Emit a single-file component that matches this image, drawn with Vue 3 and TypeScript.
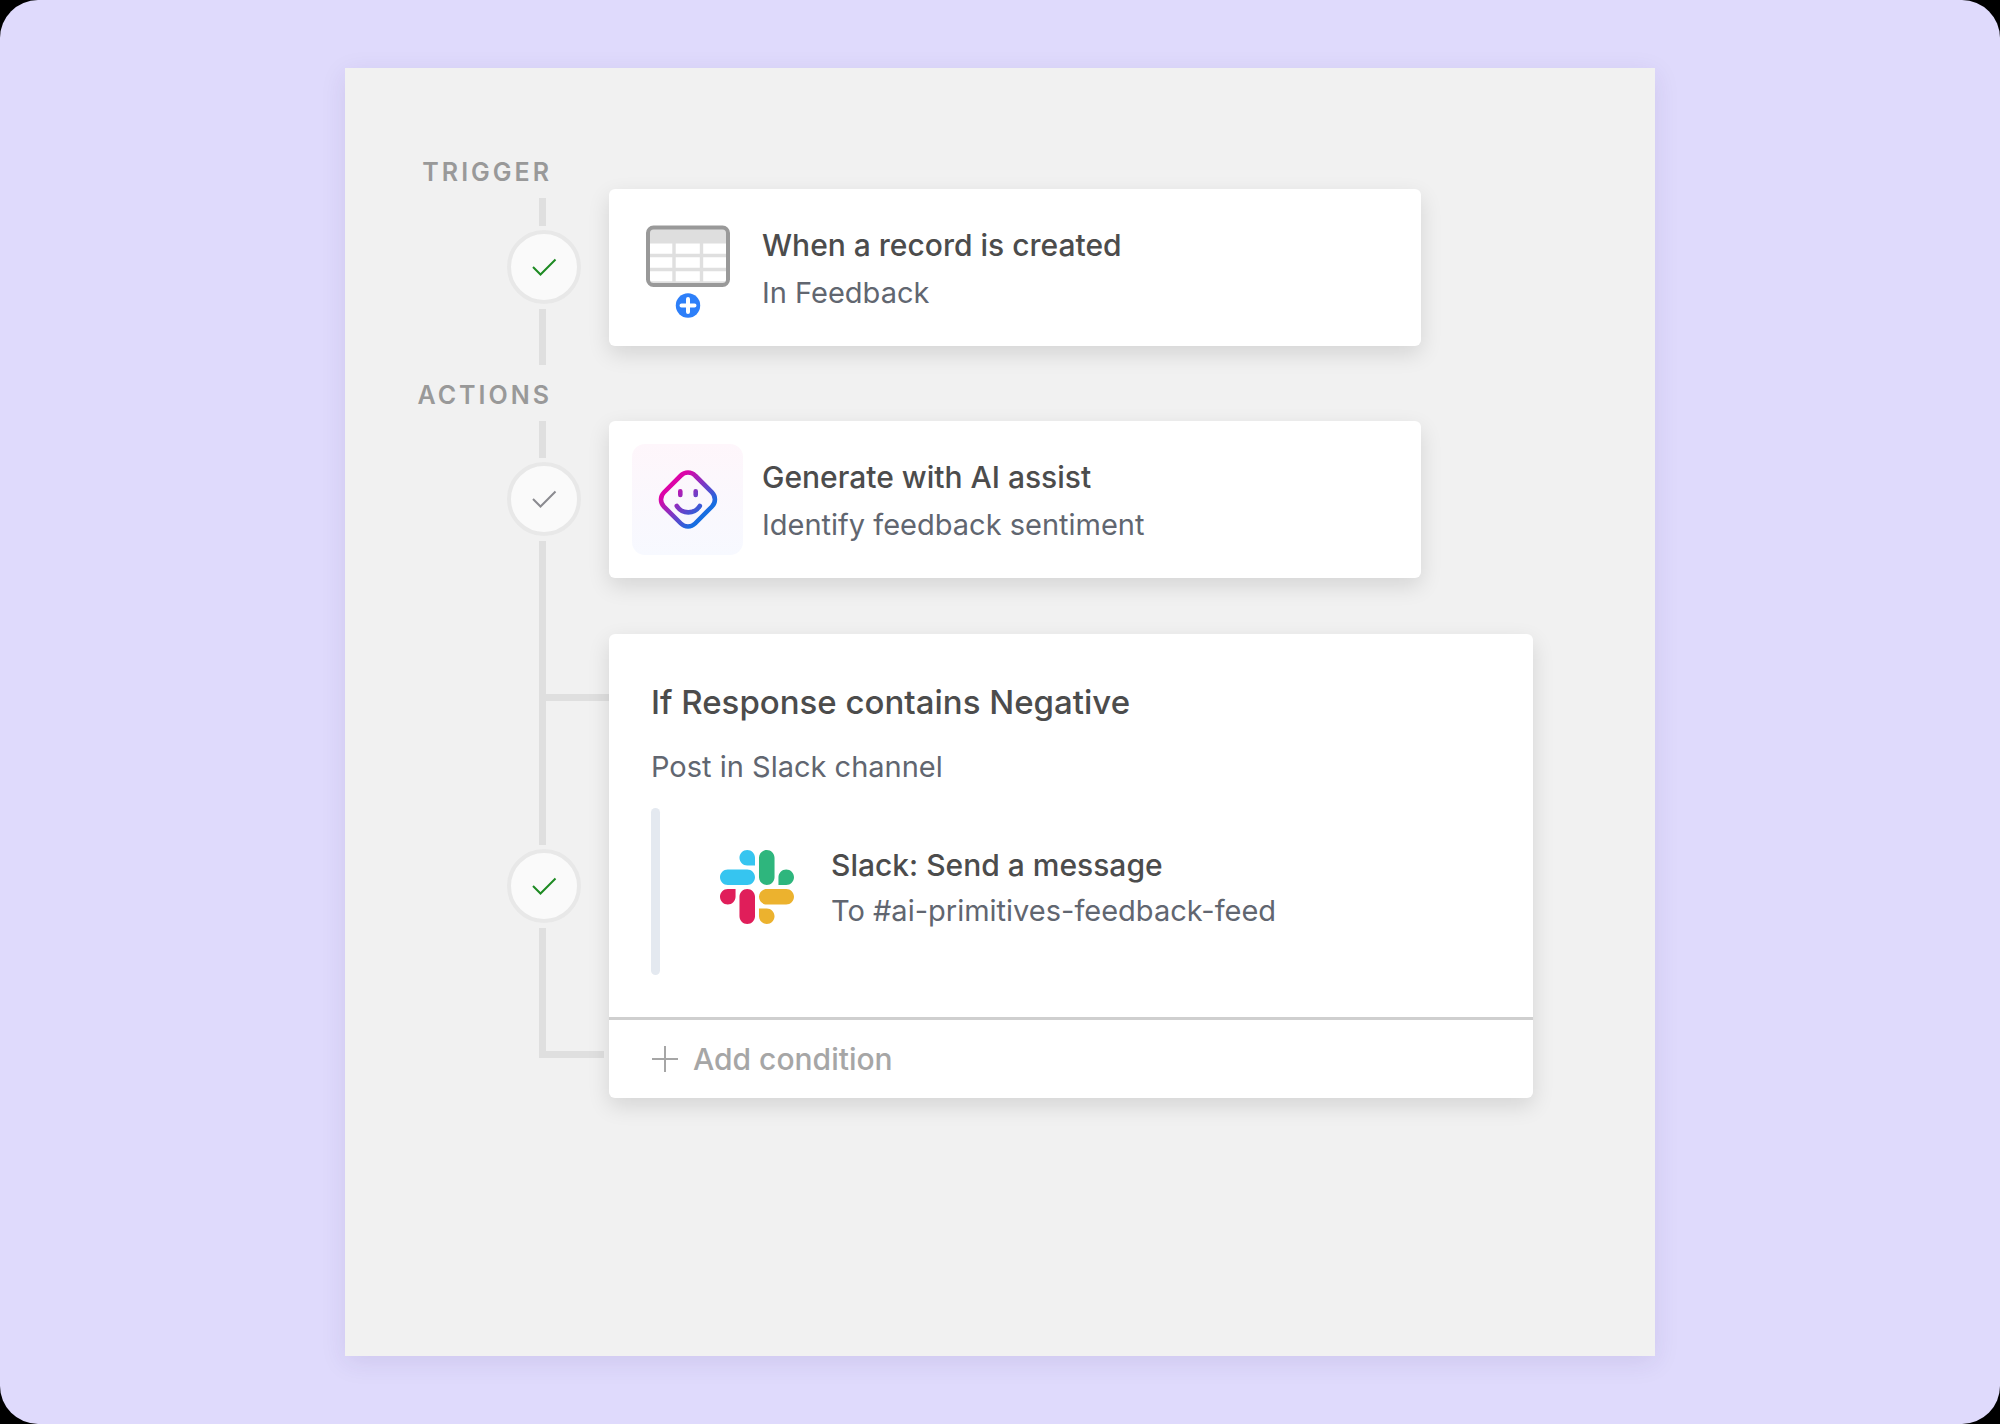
<script setup lang="ts">
interface SimpleStep {
  label: string
  status: 'done' | 'idle'
  icon: 'table' | 'assist'
  title: string
  detail: string
}

const steps: SimpleStep[] = [
  {
    label: 'Trigger',
    status: 'done',
    icon: 'table',
    title: 'When a record is created',
    detail: 'In Feedback',
  },
  {
    label: 'Actions',
    status: 'idle',
    icon: 'assist',
    title: 'Generate with AI assist',
    detail: 'Identify feedback sentiment',
  },
]
</script>

<template>
  <main class="page">
    <div class="panel">
      <section v-for="step in steps" :key="step.label" class="step" :class="`step-${step.icon}`">
        <div class="rail">
          <h2 class="label">{{ step.label }}</h2>
          <span class="line line-in"></span>
          <span class="status" :class="step.status">
            <svg viewBox="0 0 66 66" aria-hidden="true"><path d="M22 33 29.500 40.500 44.500 25.500" /></svg>
          </span>
          <span class="line line-out"></span>
        </div>
        <article class="card">
          <svg v-if="step.icon === 'table'" class="icon" viewBox="0 0 111 111" aria-hidden="true">
            <rect x="16" y="16" width="80" height="57" rx="5" fill="#fff" />
            <path d="M17 17h78v14.500H17z" fill="#dedede" />
            <path d="M17 43.500h78M17 57.500h78M42 31v41M69.500 31v41M17 71h78" fill="none" stroke="#dfdfdf" stroke-width="3.400" />
            <rect x="16" y="15.500" width="80" height="57.500" rx="5.500" fill="none" stroke="#999" stroke-width="4" />
            <circle cx="56" cy="93.500" r="12.200" fill="#2d7ff9" />
            <path d="M49.500 93.500h13M56 87v13" fill="none" stroke="#fff" stroke-width="4" stroke-linecap="round" />
          </svg>
          <svg v-else class="icon assist" viewBox="0 0 111 111" aria-hidden="true">
            <defs>
              <linearGradient id="assist-stroke" gradientUnits="userSpaceOnUse" x1="41" y1="41" x2="71" y2="71">
                <stop offset="0" stop-color="#dd04a8" />
                <stop offset="1" stop-color="#166ee1" />
              </linearGradient>
            </defs>
            <g fill="none" stroke="url(#assist-stroke)" stroke-width="4.600" stroke-linecap="round">
              <path d="M63.100 31.500 80 48.400a10 10 0 0 1 0 14.100L63.100 79.500a10 10 0 0 1-14.200 0L31.900 62.600a10 10 0 0 1 0-14.100L48.900 31.500a10 10 0 0 1 14.200 0z" />
              <path d="M48.300 47.300v3.700M63.700 47.300v3.700M44.800 62c5.500 8.500 17.500 8.500 23 0" />
            </g>
          </svg>
          <div class="text">
            <h3 class="title">{{ step.title }}</h3>
            <p class="detail">{{ step.detail }}</p>
          </div>
        </article>
      </section>

      <section class="step">
        <div class="rail">
          <span class="line branch-top"></span>
          <span class="line line-mid"></span>
          <span class="status done">
            <svg viewBox="0 0 66 66" aria-hidden="true"><path d="M22 33 29.500 40.500 44.500 25.500" /></svg>
          </span>
          <span class="line branch-bottom"></span>
        </div>
        <article class="card condition">
          <div class="condition-body">
            <h3 class="condition-title">If Response contains Negative</h3>
            <p class="detail">Post in Slack channel</p>
            <div class="nested">
              <svg class="slack" viewBox="0 0 122.800 122.800" aria-hidden="true">
                <path fill="#e01e5a" d="M25.800 77.600c0 7.100-5.800 12.900-12.900 12.900S0 84.700 0 77.600s5.800-12.900 12.900-12.900h12.900v12.900zm6.500 0c0-7.100 5.800-12.900 12.900-12.900s12.900 5.800 12.900 12.900v32.300c0 7.100-5.800 12.900-12.900 12.900s-12.900-5.800-12.900-12.900V77.600z" />
                <path fill="#36c5f0" d="M45.200 25.800c-7.100 0-12.900-5.800-12.900-12.900S38.100 0 45.200 0s12.900 5.800 12.900 12.900v12.900H45.200zm0 6.500c7.100 0 12.900 5.800 12.900 12.900s-5.800 12.900-12.900 12.900H12.900C5.800 58.100 0 52.300 0 45.200s5.800-12.900 12.900-12.900h32.300z" />
                <path fill="#2eb67d" d="M97 45.200c0-7.100 5.800-12.900 12.900-12.900s12.900 5.800 12.900 12.900-5.800 12.900-12.900 12.900H97V45.200zm-6.500 0c0 7.100-5.800 12.900-12.900 12.900s-12.900-5.800-12.900-12.900V12.900C64.700 5.800 70.500 0 77.600 0s12.900 5.800 12.900 12.900v32.300z" />
                <path fill="#ecb22e" d="M77.600 97c7.100 0 12.900 5.800 12.900 12.900s-5.800 12.900-12.900 12.900-12.900-5.800-12.900-12.900V97h12.900zm0-6.500c-7.100 0-12.900-5.800-12.900-12.900s5.800-12.900 12.900-12.900h32.300c7.100 0 12.900 5.800 12.900 12.900s-5.800 12.900-12.900 12.900H77.600z" />
              </svg>
              <div class="text">
                <h4 class="title">Slack: Send a message</h4>
                <p class="detail">To #ai-primitives-feedback-feed</p>
              </div>
            </div>
          </div>
          <button type="button" class="add">
            <svg viewBox="0 0 28 28" aria-hidden="true"><path d="M14 1v26M1 14h26" /></svg>
            <span>Add condition</span>
          </button>
        </article>
      </section>
    </div>
  </main>
</template>

<style>
html {
  background: #000;
}
</style>

<style scoped>
.page {
  box-sizing: border-box;
  min-height: 100vh;
  padding: 68px;
  display: flex;
  flex-direction: column;
  align-items: center;
  background: #dfdafc;
  border-radius: 38px;
  font-family: Inter, "Liberation Sans", sans-serif;
}

.panel {
  box-sizing: border-box;
  flex: 1;
  width: 100%;
  max-width: 1310px;
  padding: 88px 64px;
  background: #f1f1f1;
  box-shadow: 0 6px 24px rgba(60, 40, 110, 0.1);
}

h2,
h3,
h4,
p {
  margin: 0;
}

.step {
  display: grid;
  grid-template-columns: 200px minmax(0, 1fr);
}

.rail {
  display: flex;
  flex-direction: column;
  align-items: flex-start;
}

.label {
  width: 143px;
  margin-bottom: 10px;
  text-align: right;
  text-transform: uppercase;
  font-size: 25px;
  line-height: 32px;
  font-weight: 600;
  letter-spacing: 3px;
  color: #999;
}

.line {
  box-sizing: border-box;
  margin-left: 130px;
  border: 0 solid #dfdfdf;
  border-left-width: 7px;
}

.line-in {
  height: 28px;
}

.line-out {
  height: 56px;
}

.line-mid {
  height: 144px;
}

.branch-top {
  width: 70px;
  height: 67px;
  border-bottom-width: 7px;
}

.branch-bottom {
  width: 65px;
  height: 130px;
  border-bottom-width: 7px;
}

.status {
  box-sizing: border-box;
  width: 74px;
  height: 74px;
  margin: 4px 0 5px 98px;
  border: 4px solid #e8e8e8;
  border-radius: 50%;
  background: #fafafa;
}

.status svg {
  display: block;
  fill: none;
  stroke: #8a8a8f;
  stroke-width: 2;
}

.status.done svg {
  stroke: #1d8a22;
}

.card {
  box-sizing: border-box;
  align-self: start;
  display: flex;
  align-items: center;
  gap: 19px;
  max-width: 812px;
  padding: 23px;
  background: #fff;
  border-radius: 6px;
  box-shadow: 0 8px 22px rgba(0, 0, 0, 0.12);
}

.step-table {
  padding-bottom: 14px;
}

.step-table .card {
  margin-top: 33px;
}

.step-assist .card {
  margin: 42px 0 56px;
}

.step-assist .line-in {
  height: 37px;
}

.step-assist .line-out {
  flex: 1;
}

.icon {
  flex: none;
  width: 111px;
  height: 111px;
}

.assist {
  border-radius: 13px;
  background: linear-gradient(#fef6fb, #f7f9ff);
}

.text {
  padding-top: 2px;
}

.title {
  font-size: 30px;
  line-height: 48px;
  font-weight: 500;
  color: #4c4c4c;
}

.detail {
  font-size: 29px;
  line-height: 48px;
  color: #616670;
}

.condition {
  display: block;
  max-width: 924px;
  padding: 0;
}

.condition-body {
  padding: 44px 42px 42px;
}

.condition-title {
  margin-bottom: 17px;
  font-size: 33px;
  line-height: 48px;
  font-weight: 500;
  color: #4c4c4c;
}

.nested {
  box-sizing: border-box;
  display: flex;
  align-items: center;
  gap: 37px;
  min-height: 167px;
  margin-top: 17px;
  padding: 0 0 9px 69px;
  position: relative;
}

.nested .title,
.nested .detail {
  line-height: 46px;
}

.nested::before {
  content: "";
  position: absolute;
  inset: 0 auto 0 0;
  width: 9px;
  border-radius: 5px;
  background: #e4e9f0;
}

.slack {
  flex: none;
  width: 74px;
  height: 74px;
}

.add {
  box-sizing: border-box;
  display: flex;
  align-items: center;
  gap: 14px;
  width: 100%;
  height: 81px;
  padding: 0 42px;
  border: 0;
  border-top: 3px solid #cfcfcf;
  border-radius: 0 0 6px 6px;
  background: transparent;
  font: 500 30px/48px Inter, "Liberation Sans", sans-serif;
  color: #a6a6a6;
  cursor: pointer;
}

.add svg {
  width: 28px;
  height: 28px;
  fill: none;
  stroke: currentColor;
  stroke-width: 2;
}
</style>
